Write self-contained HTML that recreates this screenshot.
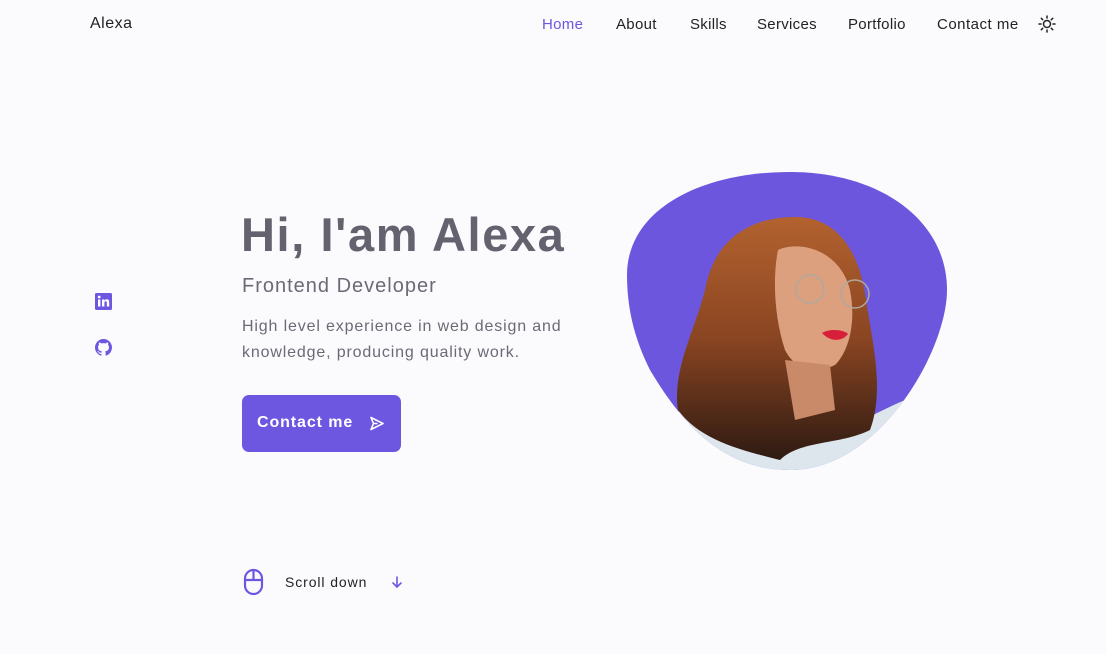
<!DOCTYPE html>
<html><head><meta charset="utf-8"><style>
*{margin:0;padding:0;box-sizing:border-box}
body{width:1106px;height:654px;background:#fbfbfe;font-family:"Liberation Sans",sans-serif;position:relative;overflow:hidden;color:#333}
.a{position:absolute;white-space:nowrap}
nav span{position:absolute;top:16px;font-size:15px;color:#222;letter-spacing:.3px}
</style></head><body>
<div class="a" style="left:90px;top:15px;font-size:16px;color:#222;letter-spacing:.5px">Alexa</div>
<nav>
<span style="left:542px;color:#6e57e0">Home</span>
<span style="left:616px">About</span>
<span style="left:690px">Skills</span>
<span style="left:757px">Services</span>
<span style="left:848px">Portfolio</span>
<span style="left:937px;letter-spacing:.5px">Contact me</span>
</nav>
<svg class="a" style="left:1038px;top:15px" width="18" height="18" viewBox="0 0 18 18" fill="none" stroke="#222" stroke-width="1.5" stroke-linecap="round"><circle cx="9" cy="9" r="3.5"/><path d="M9 1v2M9 15v2M1 9h2M15 9h2M3.3 3.3l1.4 1.4M13.3 13.3l1.4 1.4M3.3 14.7l1.4-1.4M13.3 4.7l1.4-1.4"/></svg>

<svg class="a" style="left:95px;top:293px" width="17" height="17" viewBox="0 0 17 17"><rect width="17" height="17" rx="1.5" fill="#6e57e0"/><rect x="3" y="6.5" width="2.4" height="7" fill="#fff"/><circle cx="4.2" cy="4" r="1.4" fill="#fff"/><path d="M7 6.5h2.3v1.2c.5-.9 1.4-1.4 2.5-1.4 1.8 0 2.4 1.2 2.4 3V13.5h-2.4V9.8c0-.9-.3-1.5-1.1-1.5-.9 0-1.3.6-1.3 1.5v3.7H7z" fill="#fff"/></svg>
<svg class="a" style="left:95px;top:339px" width="17" height="17" viewBox="0 0 16 16"><path fill="#6e57e0" d="M8 0C3.58 0 0 3.58 0 8c0 3.54 2.290 6.530 5.470 7.590.4.07.55-.17.55-.38v-1.33c-2.230.48-2.700-1.070-2.700-1.070-.36-.92-.89-1.170-.89-1.170-.73-.5.06-.49.06-.49.8.06 1.230.83 1.230.83.72 1.220 1.870.87 2.330.67.07-.52.28-.87.5-1.070-1.780-.2-3.640-.89-3.640-3.950 0-.87.31-1.590.82-2.150-.08-.2-.36-1.020.08-2.120 0 0 .67-.21 2.200.82a7.600 7.600 0 0 1 4 0c1.530-1.040 2.200-.82 2.200-.82.44 1.100.16 1.920.08 2.120.51.56.82 1.270.82 2.150 0 3.070-1.870 3.750-3.650 3.950.29.25.54.73.54 1.480v2.200c0 .21.15.46.55.38A8.010 8.010 0 0 0 16 8c0-4.420-3.580-8-8-8z"/></svg>

<div class="a" style="left:241px;top:207px;font-size:47px;font-weight:bold;color:#63626e;letter-spacing:1.6px">Hi, I'am Alexa</div>
<div class="a" style="left:242px;top:275px;font-size:20px;color:#6b6a75;letter-spacing:1px">Frontend Developer</div>
<div class="a" style="left:242px;top:314px;font-size:16px;line-height:26px;color:#6b6a75;letter-spacing:.85px">High level experience in web design and<br>knowledge, producing quality work.</div>
<div class="a" style="left:242px;top:395px;width:159px;height:57px;background:#6e57e0;border-radius:7px"></div>
<div class="a" style="left:257px;top:414px;font-size:16px;font-weight:bold;color:#fff;letter-spacing:.9px">Contact me</div>
<svg class="a" style="left:369px;top:416px" width="16" height="15" viewBox="0 0 16 15" fill="none" stroke="#fff" stroke-width="1.6" stroke-linejoin="round"><path d="M2 1.5l12 6-12 6 2.5-6z M4.5 7.5h4"/></svg>

<svg class="a" style="left:243px;top:568px" width="21" height="28" viewBox="0 0 21 28" fill="none" stroke="#6e57e0" stroke-width="2.2"><rect x="2" y="2" width="17" height="24" rx="8.5"/><path d="M10.5 2v10M2 12h17"/></svg>
<div class="a" style="left:285px;top:574px;font-size:14px;color:#222;letter-spacing:.9px">Scroll down</div>
<svg class="a" style="left:391px;top:575px" width="12" height="14" viewBox="0 0 12 14" fill="none" stroke="#6e57e0" stroke-width="1.6" stroke-linecap="round"><path d="M6 2v10M2 8l4 4 4-4"/></svg>

<svg class="a" style="left:0;top:0" width="1106" height="654" viewBox="0 0 1106 654">
<defs>
<clipPath id="b"><path d="M790,172 C880,172 947,220 947,290 C947,350 880,470 790,470 C720,470 680,420 650,370 C635,340 627,310 627,275 C627,210 700,172 790,172 Z"/></clipPath>
<linearGradient id="h" x1="0" y1="0" x2="0" y2="1"><stop offset="0" stop-color="#b3622f"/><stop offset=".5" stop-color="#8a4522"/><stop offset="1" stop-color="#2e1a12"/></linearGradient>
</defs>
<path d="M790,172 C880,172 947,220 947,290 C947,350 880,470 790,470 C720,470 680,420 650,370 C635,340 627,310 627,275 C627,210 700,172 790,172 Z" fill="#6b56dd"/>
<g clip-path="url(#b)">
<path d="M680,410 C720,420 760,440 790,445 C830,440 880,410 905,400 L960,480 L640,480Z" fill="#dde6ec"/>
<path d="M705,290 C715,235 755,217 795,217 C840,217 860,255 866,300 C872,340 885,390 870,430 C840,445 800,440 780,460 C740,450 700,440 678,410 C672,370 695,330 705,290Z" fill="url(#h)"/>
<path d="M778,250 C800,240 840,250 850,290 C856,320 850,350 835,365 C815,375 795,370 785,350 C775,320 772,280 778,250Z" fill="#dca07e"/>
<path d="M785,360 L830,365 L835,410 L795,420Z" fill="#c98a6a"/>
<path d="M822,333 C830,328 845,330 848,334 C842,342 830,342 822,333Z" fill="#d81f3a"/>
<circle cx="810" cy="289" r="14" fill="none" stroke="#b0a8a0" stroke-width="1.5"/>
<circle cx="855" cy="294" r="14" fill="none" stroke="#b0a8a0" stroke-width="1.5"/>
</g>
</svg>
</body></html>
